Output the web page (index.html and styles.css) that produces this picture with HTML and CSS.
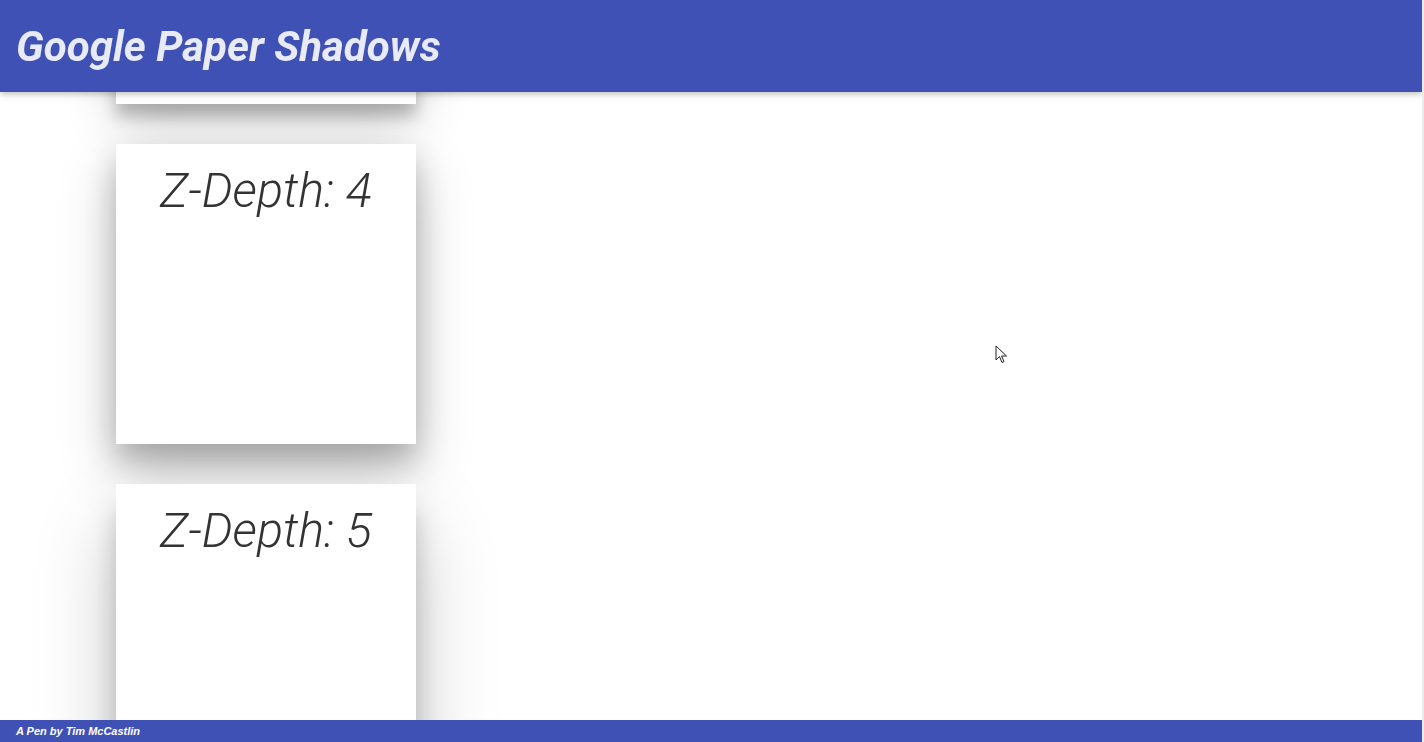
FILE: index.html
```html
<!DOCTYPE html>
<html>
<head>
<meta charset="utf-8">
<link rel="stylesheet" href="styles.css">
</head>
<body>
<header class="topbar">
  <h1 class="title">Google Paper Shadows</h1>
</header>
<main class="stack">
  <div class="paper z3"><span class="label">Z-Depth: 3</span></div>
  <div class="paper z4"><span class="label">Z-Depth: 4</span></div>
  <div class="paper z5"><span class="label">Z-Depth: 5</span></div>
</main>
<footer class="penbar">A Pen by Tim McCastlin</footer>
<div class="scrolltrack"></div>
<svg class="cursor" width="14" height="20" viewBox="0 0 14 20"><path d="M1 1 L1 15 L4.5 11.5 L7 17.5 L9 16.6 L6.6 11 L11.5 11 Z" fill="#fff" stroke="#222" stroke-width="1"/></svg>
</body>
</html>
```
FILE: styles.css
```css
html { overflow: hidden; }
body {
  margin: 0;
  background: #fff;
  font-family: Roboto, "Noto Sans", sans-serif;
}
.topbar {
  position: fixed;
  top: 0;
  left: 0;
  right: 2px;
  height: 92px;
  background: #3f51b5;
  box-shadow: 0 2px 5px 0 rgba(0,0,0,0.16), 0 2px 10px 0 rgba(0,0,0,0.12);
  z-index: 5;
  display: flex;
  align-items: center;
}
.title {
  margin: 0 0 0 16px;
  font-family: Roboto, sans-serif;
  font-weight: 700;
  font-style: italic;
  font-size: 42px;
  color: #e8eaf6;
}
.stack {
  margin-top: -196px;
  padding-left: 116px;
  display: flex;
  flex-direction: column;
  gap: 40px;
}
.paper {
  width: 300px;
  height: 300px;
  background: #fff;
  display: flex;
  justify-content: center;
  align-items: flex-start;
}
.label {
  margin-top: 18px;
  font-family: Roboto, sans-serif;
  font-weight: 300;
  font-style: italic;
  font-size: 48.5px;
  color: #333;
}
.z3 { box-shadow: 0 12px 15px 0 rgba(0,0,0,0.24), 0 17px 50px 0 rgba(0,0,0,0.19); }
.z4 { box-shadow: 0 16px 28px 0 rgba(0,0,0,0.22), 0 25px 55px 0 rgba(0,0,0,0.21); }
.z5 { box-shadow: 0 27px 24px 0 rgba(0,0,0,0.2), 0 40px 77px 0 rgba(0,0,0,0.22); }
.penbar {
  position: fixed;
  left: 0;
  right: 2px;
  bottom: 0;
  height: 22px;
  background: #3f51b5;
  color: #fff;
  font-family: "Liberation Sans", Arial, sans-serif;
  font-style: italic;
  font-weight: 700;
  font-size: 11px;
  line-height: 22px;
  padding-left: 16px;
  z-index: 5;
}
.scrolltrack {
  position: fixed;
  top: 0;
  right: 0;
  width: 2px;
  height: 100%;
  background: #ececec;
  z-index: 6;
}
.cursor {
  position: fixed;
  left: 995px;
  top: 345px;
  z-index: 10;
}
```
